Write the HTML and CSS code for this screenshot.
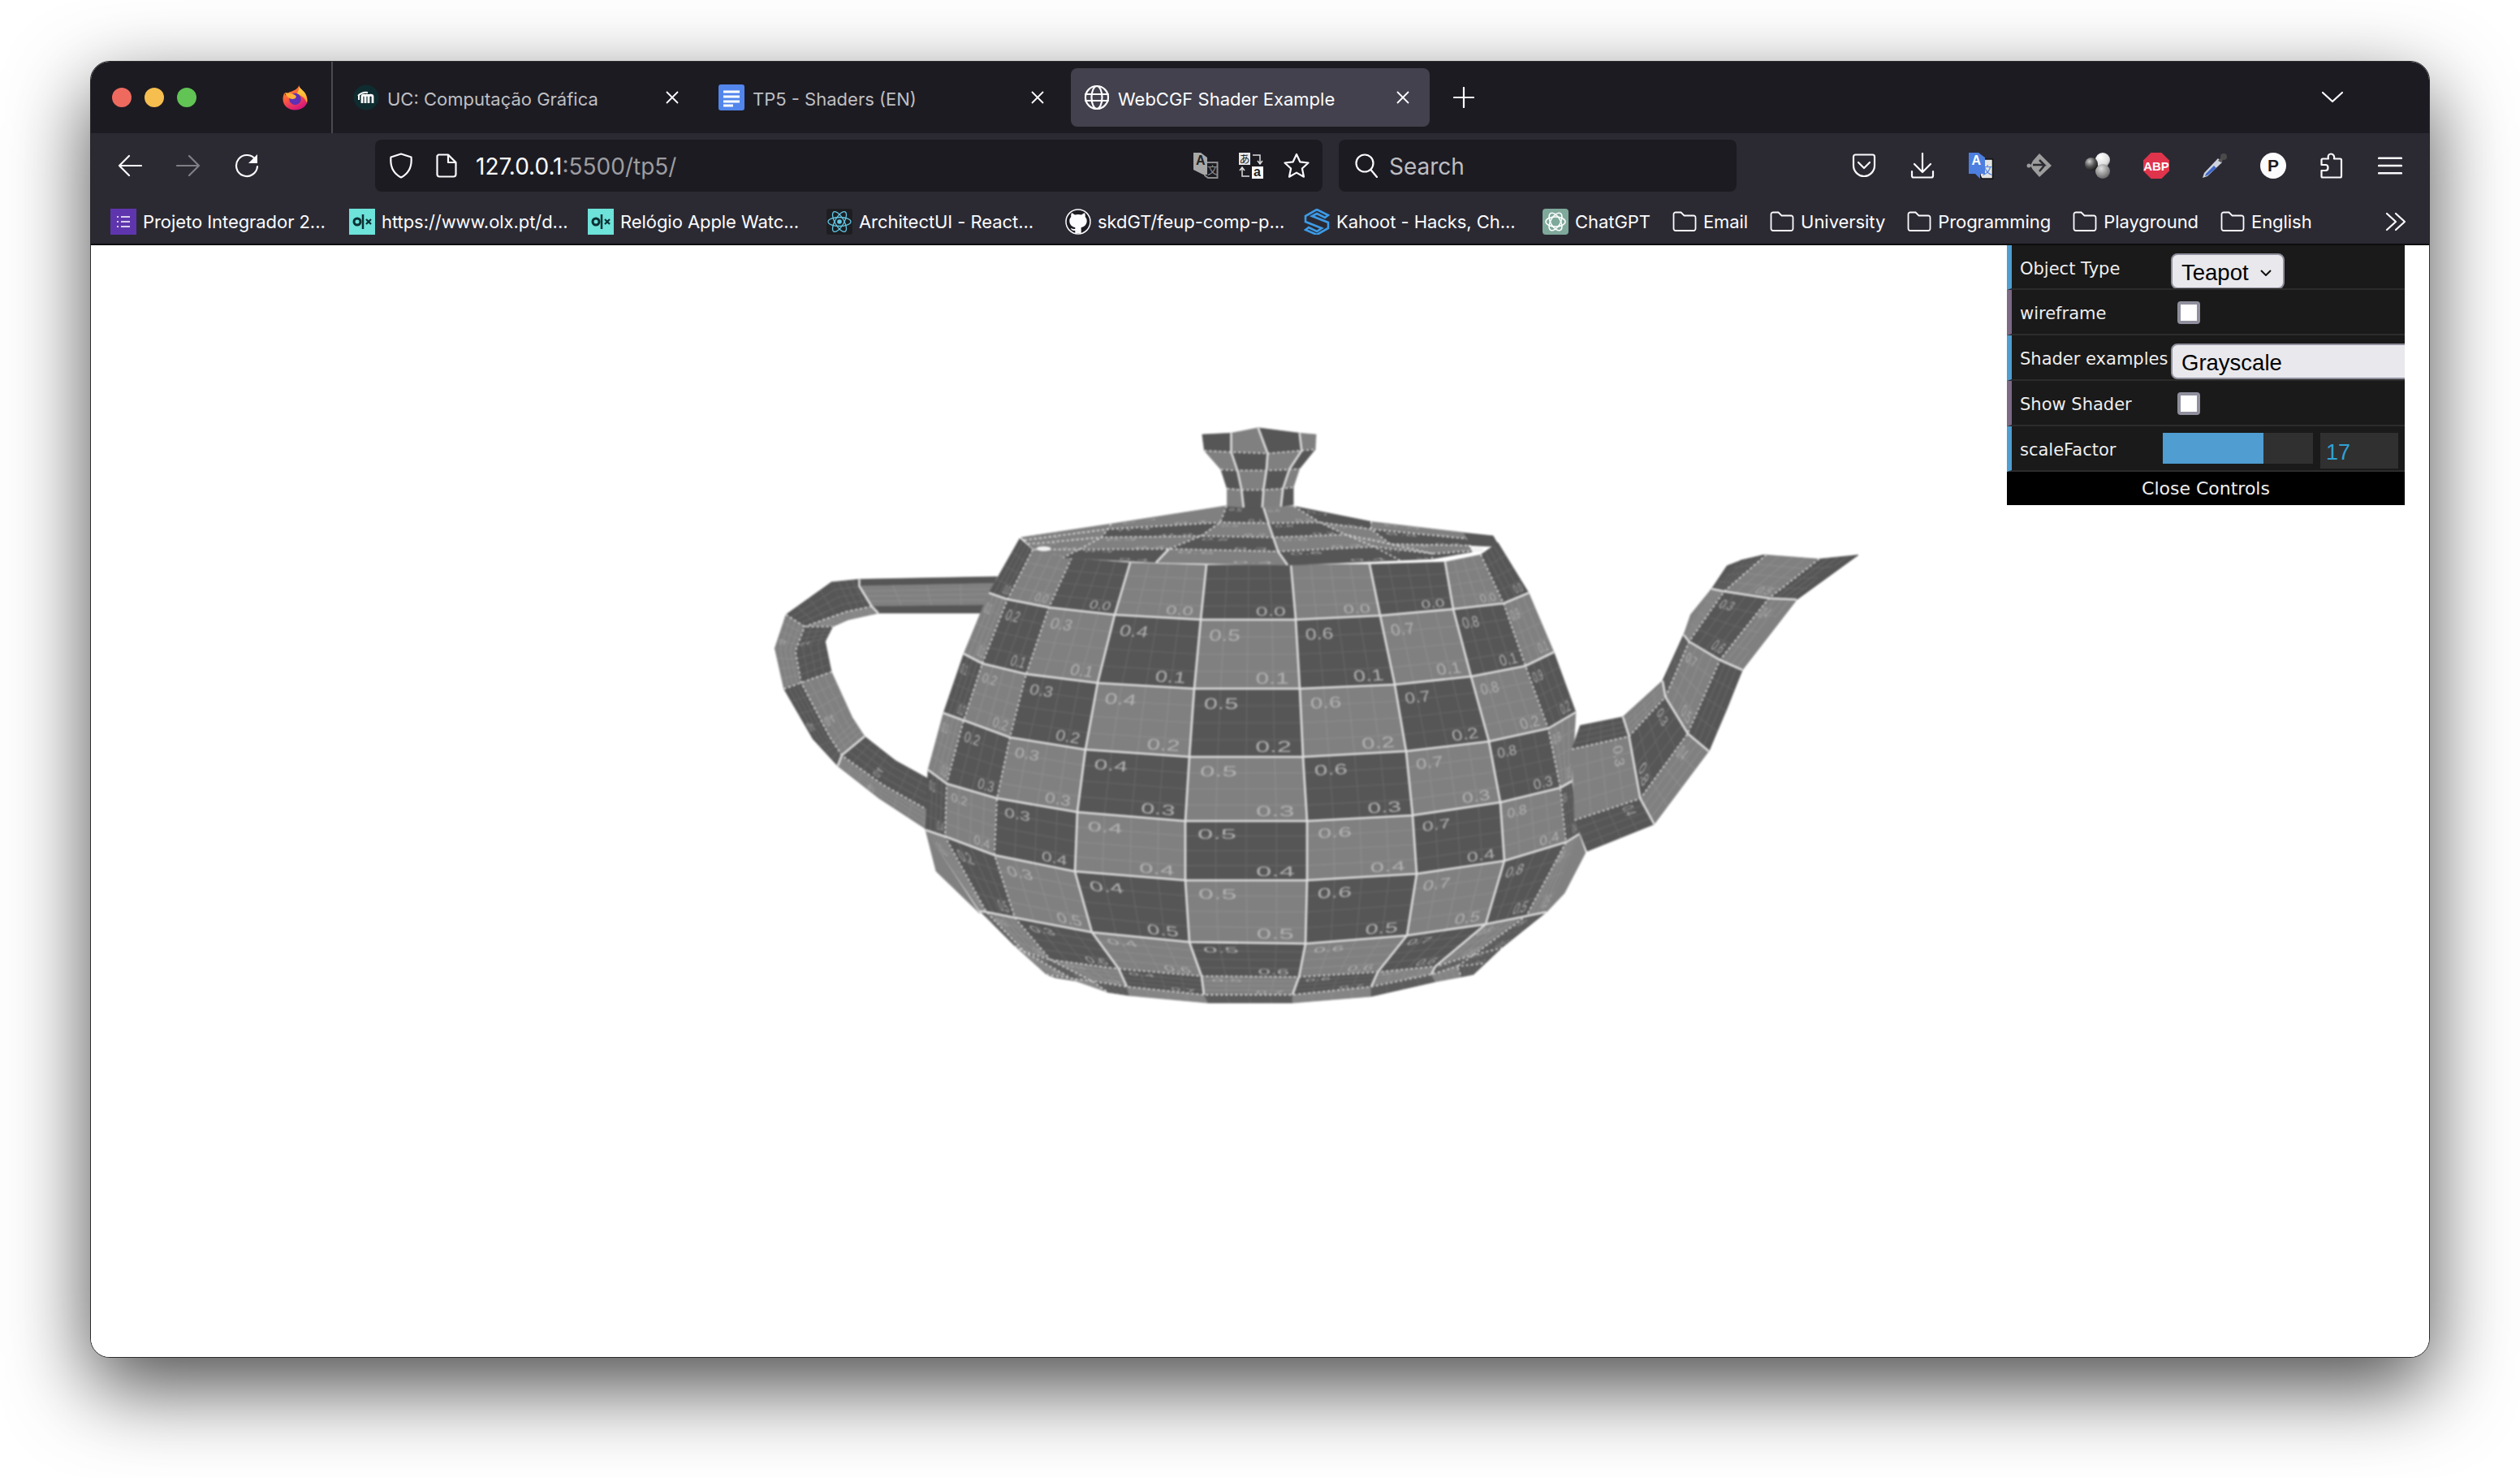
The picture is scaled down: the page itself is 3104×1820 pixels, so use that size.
FILE: index.html
```html
<!DOCTYPE html>
<html lang="en">
<head>
<meta charset="utf-8">
<title>WebCGF Shader Example</title>
<link rel="stylesheet" href="styles.css">
</head>
<body>
<svg class="defs" width="0" height="0" aria-hidden="true">
  <defs>
    <linearGradient id="ffBody" x1="0" y1="0" x2="0.5" y2="1"><stop offset="0" stop-color="#ffa52c"/><stop offset="0.5" stop-color="#ff5f3a"/><stop offset="1" stop-color="#d9197a"/></linearGradient>
    <linearGradient id="ffFlame" x1="0" y1="0" x2="0" y2="1"><stop offset="0" stop-color="#ffe14a"/><stop offset="1" stop-color="#ff9a24"/></linearGradient>
    <radialGradient id="ballDark" cx="0.35" cy="0.3" r="0.8"><stop offset="0" stop-color="#cfcfcf"/><stop offset="0.5" stop-color="#555"/><stop offset="1" stop-color="#111"/></radialGradient>
    <radialGradient id="ballLight" cx="0.35" cy="0.3" r="0.8"><stop offset="0" stop-color="#fff"/><stop offset="0.7" stop-color="#ddd"/><stop offset="1" stop-color="#999"/></radialGradient>
    <radialGradient id="ballMid" cx="0.4" cy="0.3" r="0.8"><stop offset="0" stop-color="#e0e0e0"/><stop offset="0.6" stop-color="#8d8d8d"/><stop offset="1" stop-color="#555"/></radialGradient>
    <symbol id="folder" viewBox="0 0 30 26"><path d="M1.500 4a2.500 2.500 0 0 1 2.500-2.500h6.500l4 4H26a2.500 2.500 0 0 1 2.500 2.500v13.500a2.500 2.500 0 0 1-2.500 2.500H4a2.500 2.500 0 0 1-2.500-2.500z"/></symbol>
    <symbol id="olx" viewBox="0 0 32 32"><rect width="32" height="32" fill="#6de3da"/><circle cx="10" cy="16" r="4" fill="none" stroke="#0b2f33" stroke-width="3"/><path d="M17 7v18" stroke="#0b2f33" stroke-width="2.500"/><path d="M21 13l6 6M27 13l-6 6" stroke="#0b2f33" stroke-width="2.200"/></symbol>
    <symbol id="close" viewBox="0 0 20 20"><path d="M3 3l14 14M17 3L3 17"/></symbol>
  </defs>
</svg>

<div class="window">
  <header class="titlebar">
    <div class="lights"><span class="light red"></span><span class="light amber"></span><span class="light green"></span></div>
    <svg class="firefox" viewBox="0 0 32 32"><path d="M21 0c0 5 5 6 8 11 3 5 3 10 2 12-2 5-8 9-15 9C7 32 .5 26 .5 18c0-3 1-6 2-8 .5 2 1 3 2 3.500C6 11 8 9 11 8.500 15 7 20 5 21 0z" fill="url(#ffBody)"/><path d="M21 0c0 5 5 6 8 11 2 4 3 8 2 12-2-6-6-10-14-11 3-3 5-7 4-12z" fill="url(#ffFlame)"/><circle cx="16" cy="18" r="7.500" fill="#5d30b5"/><path d="M3 10c5 0 11 1 14 4 1 2-1 4-4 4-4 0-8-3-10-8z" fill="#ffb03a"/></svg>
    <span class="tabsep"></span>
    <div class="tabs">
      <div class="tab">
        <svg class="tabicon" viewBox="0 0 32 32"><circle cx="16" cy="16" r="15.500" fill="#0f2d30"/><path d="M11 23v-8c0-2.500 4-2.500 4 0v8M15 23v-8c0-2.500 4-2.500 4 0v8M19 23v-8c0-2.500 5-2.500 5 0v8" fill="none" stroke="#fff" stroke-width="2.800"/><path d="M6 14c3-3 7-5 12-4M7 13v6" fill="none" stroke="#fff" stroke-width="2"/></svg>
        <span class="tabtext">UC: Computação Gráfica</span>
        <svg class="tabclose"><use href="#close"/></svg>
      </div>
      <div class="tab">
        <svg class="tabicon" viewBox="0 0 32 32"><rect width="32" height="32" rx="3" fill="#5286ec"/><path d="M6 9h20M6 15h20M6 21h20M6 26h12" stroke="#fff" stroke-width="3" fill="none"/></svg>
        <span class="tabtext">TP5 - Shaders (EN)</span>
        <svg class="tabclose"><use href="#close"/></svg>
      </div>
      <div class="tab active">
        <svg class="tabicon icon-line" viewBox="0 0 32 32"><circle cx="16" cy="16" r="14"/><ellipse cx="16" cy="16" rx="6.500" ry="14"/><path d="M2 12h28M2 20h28"/></svg>
        <span class="tabtext">WebCGF Shader Example</span>
        <svg class="tabclose"><use href="#close"/></svg>
      </div>
    </div>
    <svg class="newtab icon-line" viewBox="0 0 26 26"><path d="M13 1v24M1 13h24"/></svg>
    <svg class="tablist icon-line" viewBox="0 0 26 16"><path d="M1 2l12 11L25 2"/></svg>
  </header>

  <nav class="toolbar">
    <div class="navbtn"><svg class="icon30 icon-line" viewBox="0 0 30 30"><path d="M29 15H2M14 3L2 15l12 12"/></svg></div>
    <div class="navbtn dim"><svg class="icon30 icon-line" viewBox="0 0 30 30"><path d="M1 15h27M16 3l12 12-12 12"/></svg></div>
    <div class="navbtn"><svg class="icon30 icon-line" viewBox="0 0 30 30"><path d="M26 8A13 13 0 1 0 28 16"/><path class="solid" d="M28 1v11H17z"/></svg></div>
    <div class="urlbar">
      <svg class="shield icon-line" viewBox="0 0 28 32"><path d="M14 1.500l12.500 4c1 10-1 19-12.500 25C2.500 24.500.500 15.500 1.500 5.500z"/></svg>
      <svg class="fileicon icon-line" viewBox="0 0 26 30"><path d="M3 1.500h12l9.500 9.500v14.500a3 3 0 0 1-3 3H4.500a3 3 0 0 1-3-3V3zM15 1.500V11h9.500"/></svg>
      <span class="url">127.0.0.1<span class="url-dim">:5500/tp5/</span></span>
      <span class="url-actions">
        <svg class="icon32" viewBox="0 0 32 32"><path d="M15 12h15.500v19H19l-4-3z" fill="none" stroke="#8c8c8c" stroke-width="2"/><text class="tr-cjk" x="18" y="26" fill="#8c8c8c">文</text><path d="M1 0h9l8 6v21h-5L1 21z" fill="#a8a8a8"/><text class="tr-a" x="4" y="15" fill="#222">A</text></svg>
        <svg class="icon32" viewBox="0 0 32 32"><rect x="1" y="0" width="14" height="15" fill="#e8e8e8"/><text class="tr-cjk" x="1.500" y="12" fill="#222">あ</text><rect x="17" y="17" width="14" height="15" fill="#fff"/><text class="tr-a" x="19" y="29" fill="#222">a</text><path d="M18 3h9v10M24 10l3 4 3-4M14 29H5V19M2 22l3-4 3 4" fill="none" stroke="#ddd" stroke-width="1.500"/></svg>
        <svg class="icon32 icon-line" viewBox="0 0 32 32"><path d="M16 2l4.300 9.300 10.200 1.200-7.600 7 2.100 10.200L16 24.600 7 29.700l2.100-10.200-7.600-7 10.200-1.200z"/></svg>
      </span>
    </div>
    <div class="searchbar">
      <svg class="searchicon icon-line" viewBox="0 0 28 30"><circle cx="12" cy="12" r="10.500"/><path d="M19.500 20L27 29"/></svg>
      <span class="searchtext">Search</span>
    </div>
    <div class="actions">
      <div class="navbtn"><svg class="icon30 icon-line" viewBox="0 0 30 32"><path d="M2 5a2.500 2.500 0 0 1 2.500-2.500h21A2.500 2.500 0 0 1 28 5v11c0 7-6 13-13 13S2 23 2 16z"/><path d="M8 12l7 7 7-7"/></svg></div>
      <div class="navbtn"><svg class="icon30 icon-line" viewBox="0 0 30 32"><path d="M15 1v23M5 14l10 10 10-10M2 23v5.500a2 2 0 0 0 2 2h22a2 2 0 0 0 2-2V23"/></svg></div>
      <div class="navbtn"><svg class="icon32" viewBox="0 0 32 32"><path d="M15 8h15.500v24H17l-2-4z" fill="#e4e4e4" stroke="#111" stroke-width="1.500"/><text class="tr-cjk" x="17.500" y="26" fill="#4d7fe0">文</text><path d="M1 0h12l8 6v20h-6v6l-6-6H1z" fill="#4d7fe0"/><text class="tr-a" x="4.500" y="15" fill="#fff">A</text></svg></div>
      <div class="navbtn"><svg class="icon32" viewBox="0 0 32 32"><path d="M16 1l15 15-15 14-8-9-3-5 3-6z" fill="#9d9d9d"/><circle cx="3" cy="16" r="2.500" fill="#9d9d9d"/><path d="M8 15h14l-6-6M22 16l-6 7" fill="none" stroke="#2b2a33" stroke-width="2.500"/></svg></div>
      <div class="navbtn"><svg class="icon32" viewBox="0 0 32 32"><circle cx="22" cy="9" r="9" fill="url(#ballLight)"/><circle cx="22" cy="23" r="9" fill="url(#ballMid)"/><circle cx="8" cy="14" r="8" fill="url(#ballDark)"/></svg></div>
      <div class="navbtn"><svg class="icon32" viewBox="0 0 32 32"><path d="M9.500 0h13L32 9.500v13L22.500 32h-13L0 22.500v-13z" fill="#e0344c"/><text class="abp" x="16" y="21.500">ABP</text></svg></div>
      <div class="navbtn"><svg class="icon32" viewBox="0 0 32 32"><path d="M20 7L3 25l-2 6 6-2 18-17z" fill="#cfd3dc"/><path d="M15 16L5 26l-1 3 3-1 11-9z" fill="#3f68c8"/><path d="M20 10l6-6 2 2-4 6" fill="#555"/><circle cx="27" cy="5" r="4" fill="#4a4a4a"/></svg></div>
      <div class="navbtn"><svg class="icon32" viewBox="0 0 32 32"><circle cx="16" cy="16" r="16" fill="#fbfbfe"/><text class="pchip" x="16" y="23">P</text></svg></div>
      <div class="navbtn"><svg class="icon30 icon-line" viewBox="0 0 28 32"><path d="M13 1.500c-3 0-4 3-3 6H3a1.500 1.500 0 0 0-1.500 1.500v6h5c4 0 4 7 0 7h-5v7A1.500 1.500 0 0 0 3 30.500h21.500A1.500 1.500 0 0 0 26 29V9a1.500 1.500 0 0 0-1.500-1.500H17c1-3-1-6-4-6z"/></svg></div>
      <div class="navbtn"><svg class="icon30 icon-line" viewBox="0 0 26 20"><path d="M1 2h24M1 10h24M1 18h24"/></svg></div>
    </div>
  </nav>

  <div class="bookmarks">
    <div class="bm wide"><svg class="bmicon" viewBox="0 0 32 32"><rect width="32" height="32" fill="#5f35ae"/><path d="M13 10h11M13 16h11M13 22h11M8 10h2M8 16h2M8 22h2" stroke="#fff" stroke-width="1.600"/></svg><span>Projeto Integrador 2...</span></div>
    <div class="bm wide"><svg class="bmicon"><use href="#olx"/></svg><span>https://www.olx.pt/d...</span></div>
    <div class="bm wide"><svg class="bmicon"><use href="#olx"/></svg><span>Relógio Apple Watc...</span></div>
    <div class="bm wide"><svg class="bmicon" viewBox="0 0 32 32"><rect width="32" height="32" rx="3" fill="#1e1e22"/><g fill="none" stroke="#61c8e6" stroke-width="1.300"><ellipse cx="16" cy="16" rx="14" ry="5.500"/><ellipse cx="16" cy="16" rx="14" ry="5.500" transform="rotate(60 16 16)"/><ellipse cx="16" cy="16" rx="14" ry="5.500" transform="rotate(120 16 16)"/></g><circle cx="16" cy="16" r="2.800" fill="#61c8e6"/></svg><span>ArchitectUI - React...</span></div>
    <div class="bm wide"><svg class="bmicon" viewBox="0 0 32 32"><circle cx="16" cy="16" r="15" fill="#1c1b22" stroke="#fbfbfe" stroke-width="1.500"/><path d="M8 5l4 2.500c2.500-.7 5.500-.7 8 0L24 5c.8 2 1 3.500.7 5 1.300 1.500 2 3 2 5 0 5-3.500 7.500-7 8v7h-7.400v-3c-3 .5-4.500-1-5.500-3 1.500.5 3 1 5.500 1v-2c-3.500-.5-7-3-7-8 0-2 .7-3.500 2-5-.3-1.500-.1-3 .7-5z" fill="#fbfbfe"/></svg><span>skdGT/feup-comp-p...</span></div>
    <div class="bm wide"><svg class="bmicon" viewBox="0 0 32 32"><path d="M16 1L2 9v7l20 8-6 4-10-5-4 3 14 6 14-8v-7L10 9l6-3 10 5 4-3z" fill="none" stroke="#3c9be8" stroke-width="2.600"/></svg><span>Kahoot - Hacks, Ch...</span></div>
    <div class="bm"><svg class="bmicon" viewBox="0 0 32 32"><rect width="32" height="32" rx="4" fill="#7fa99b"/><g fill="none" stroke="#fff" stroke-width="1.500"><ellipse cx="16" cy="16" rx="12" ry="6"/><ellipse cx="16" cy="16" rx="12" ry="6" transform="rotate(60 16 16)"/><ellipse cx="16" cy="16" rx="12" ry="6" transform="rotate(120 16 16)"/></g></svg><span>ChatGPT</span></div>
    <div class="bm"><svg class="foldericon"><use href="#folder"/></svg><span>Email</span></div>
    <div class="bm"><svg class="foldericon"><use href="#folder"/></svg><span>University</span></div>
    <div class="bm"><svg class="foldericon"><use href="#folder"/></svg><span>Programming</span></div>
    <div class="bm"><svg class="foldericon"><use href="#folder"/></svg><span>Playground</span></div>
    <div class="bm"><svg class="foldericon"><use href="#folder"/></svg><span>English</span></div>
    <svg class="overflow icon-line" viewBox="0 0 26 24"><path d="M2 2l11 10L2 22M13 2l11 10-11 10"/></svg>
  </div>

  <main class="content">
    <svg id="teapot" class="scene" viewBox="112 302 2880 1369"></svg>
    <aside class="gui">
      <div class="row blue">
        <span class="rowlabel">Object Type</span>
        <span class="sel sel-short"><span>Teapot</span><svg class="selarrow" viewBox="0 0 14 8"><path d="M1 1l6 6 6-6"/></svg></span>
      </div>
      <div class="row purple">
        <span class="rowlabel">wireframe</span>
        <span class="check"></span>
      </div>
      <div class="row blue">
        <span class="rowlabel">Shader examples</span>
        <span class="sel sel-long"><span>Grayscale</span></span>
      </div>
      <div class="row purple">
        <span class="rowlabel">Show Shader</span>
        <span class="check"></span>
      </div>
      <div class="row blue">
        <span class="rowlabel narrow">scaleFactor</span>
        <span class="slider"><span class="slider-fill"></span></span>
        <span class="number">17</span>
      </div>
      <div class="closebar">Close Controls</div>
    </aside>
  </main>
</div>
<script src="script.js"></script>
</body>
</html>
```

FILE: styles.css
```css
* { box-sizing: border-box; }
html, body { margin: 0; height: 100%; background: #fff; }
body {
  padding: 75px 111px 148px;
  font-family: Inter, "Liberation Sans", sans-serif;
  overflow: hidden;
}
.defs { display: block; height: 0; }
.window {
  width: 2882px;
  height: 1597px;
  border: 1px solid #2b2b2f;
  border-radius: 24px;
  overflow: hidden;
  display: flex;
  flex-direction: column;
  background: #fff;
  box-shadow: 0 36px 100px rgba(0, 0, 0, .7);
}
.icon-line { fill: none; stroke: #fbfbfe; stroke-width: 2.2; stroke-linecap: round; stroke-linejoin: round; }
.icon-line .solid { fill: #fbfbfe; stroke: none; }

/* title bar */
.titlebar { height: 88px; background: #1c1b22; display: flex; align-items: center; flex: none; }
.lights { display: flex; gap: 16px; padding-left: 26px; }
.light { width: 24px; height: 24px; border-radius: 50%; }
.red { background: #ee6a5f; }
.amber { background: #f5be4f; }
.green { background: #61c454; }
.firefox { width: 31px; height: 32px; margin-left: 106px; }
.tabsep { width: 2px; height: 88px; background: #4a4a50; margin-left: 29px; }
.tabs { display: flex; gap: 8px; margin-left: 9px; }
.tab { width: 442px; height: 72px; padding: 0 23px 0 16px; border-radius: 8px; display: flex; align-items: center; gap: 10px; color: #bfbfc3; font-size: 22px; }
.tab.active { background: #42414d; color: #fbfbfe; }
.tabicon { width: 32px; height: 32px; flex: none; }
.tabtext { flex: 1; white-space: nowrap; overflow: hidden; padding-top: 3px; }
.tabclose { width: 20px; height: 20px; fill: none; stroke: #fbfbfe; stroke-width: 1.800; flex: none; }
.newtab { width: 26px; height: 26px; margin-left: 29px; }
.tablist { width: 26px; height: 16px; margin-left: auto; margin-right: 106px; }

/* toolbar */
.toolbar { height: 80px; background: #2b2a33; display: flex; align-items: center; padding-left: 12px; flex: none; }
.navbtn { width: 72px; height: 64px; display: flex; align-items: center; justify-content: center; flex: none; }
.navbtn.dim { opacity: .4; }
.icon30 { width: 30px; height: 32px; }
.icon32 { width: 32px; height: 32px; flex: none; overflow: visible; }
.urlbar { width: 1167px; height: 64px; margin-left: 122px; background: #1c1b22; border-radius: 8px; display: flex; align-items: center; padding: 0 16px 0 18px; }
.shield { width: 28px; height: 32px; }
.fileicon { width: 26px; height: 30px; margin-left: 29px; }
.url { margin-left: 23px; padding-top: 2px; color: #fbfbfe; font-size: 28px; white-space: nowrap; }
.url-dim { color: #9d9da1; }
.url-actions { margin-left: auto; display: flex; gap: 24px; }
.tr-cjk { font: 13px "Noto Sans CJK JP", sans-serif; }
.tr-a { font: bold 16px "Liberation Sans", sans-serif; }
.abp { font: bold 15px "Liberation Sans", sans-serif; fill: #fff; text-anchor: middle; }
.pchip { font: bold 21px "Liberation Sans", sans-serif; fill: #1c1b22; text-anchor: middle; }
.searchbar { width: 490px; height: 64px; margin-left: 20px; background: #1c1b22; border-radius: 8px; display: flex; align-items: center; gap: 14px; padding-left: 20px; }
.searchicon { width: 28px; height: 30px; }
.searchtext { color: #bdbdc1; font-size: 28px; padding-top: 2px; }
.actions { display: flex; margin-left: 121px; }

/* bookmarks */
.bookmarks { height: 58px; background: #2b2a33; border-bottom: 2px solid #0c0c0d; display: flex; align-items: center; gap: 27px; padding: 2px 0 0 24px; color: #fbfbfe; font-size: 22px; letter-spacing: -.06px; flex: none; }
.bm { display: flex; align-items: center; gap: 8px; white-space: nowrap; flex: none; }
.bm.wide { width: 267px; }
.bmicon { width: 32px; height: 32px; flex: none; }
.foldericon { width: 30px; height: 26px; fill: none; stroke: #fbfbfe; stroke-width: 1.800; flex: none; }
.overflow { width: 26px; height: 24px; margin-left: auto; margin-right: 28px; }

/* content */
.content { flex: 1; position: relative; background: #fff; overflow: hidden; min-height: 0; }
.scene { display: block; width: 100%; height: 100%; filter: blur(.8px); }
.cd { fill: #565656; stroke: #565656; stroke-width: .6; }
.cl { fill: #808080; stroke: #808080; stroke-width: .6; }
.gl { fill: none; stroke: rgba(255, 255, 255, .1); stroke-width: 1.200; }
.bl { fill: none; stroke: #dedede; stroke-width: 2.600; stroke-linejoin: round; }
.dl { fill: none; stroke: #dadada; stroke-width: 1.800; stroke-dasharray: 3 3; }
.hl { fill: #f2f2f2; }
.tl { font: 23px "Liberation Sans", sans-serif; fill: #b2b2b2; }

/* controls */
.gui { position: absolute; top: 0; right: 30px; width: 490px; color: #eee; font: 21px "DejaVu Sans", sans-serif; }
.row { height: 56px; background: #1a1a1a; border-bottom: 2px solid #2c2c2c; border-left: 6px solid; display: flex; align-items: flex-start; padding-left: 10px; overflow: hidden; }
.row:first-child { height: 55px; }
.blue { border-left-color: #4f9dd1; }
.purple { border-left-color: #7d6a85; }
.rowlabel { width: 186px; flex: none; line-height: 59px; white-space: nowrap; text-shadow: 0 -1px 0 #111; }
.rowlabel.narrow { width: 176px; }
.sel { display: flex; align-items: center; height: 44px; margin-top: 10px; background: #e9e9ed; border: 2px solid #8f8f9d; border-radius: 8px; padding: 3px 11px 0; color: #000; font: 27.5px "Liberation Sans", sans-serif; flex: none; }
.sel-short { width: 140px; justify-content: space-between; }
.sel-long { width: 320px; }
.selarrow { width: 14px; height: 8px; fill: none; stroke: #111; stroke-width: 2; margin-right: 3px; }
.check { width: 28px; height: 28px; margin: 14px 0 0 8px; background: #fff; border: 4px solid #8f8f9d; border-radius: 4px; flex: none; }
.slider { width: 185px; height: 38px; margin-top: 8px; background: #303030; flex: none; display: block; }
.slider-fill { display: block; width: 124px; height: 100%; background: #4f9dd1; }
.number { width: 96px; height: 44px; margin: 8px 0 0 9px; background: #303030; color: #2fa1d6; font: 27px "Liberation Sans", sans-serif; line-height: 48px; padding-left: 7px; flex: none; }
.closebar { height: 41px; background: #000; text-align: center; line-height: 42px; font-size: 22px; text-shadow: 0 -1px 0 #111; }
```

FILE: script.js
```javascript
(function () {
  var out = [];
  var z5 = function (p) { return [940 + p[0] / 1.96, 500 + p[1] / 3]; };
  var z7 = function (p) { return [1800 + p[0] / 2.904, 640 + p[1] / 3]; };
  var zl = function (p) { return [1250 + p[0] / 2.529, 610 + p[1] / 3]; };
  function lerp(a, b, t) { return [a[0] + (b[0] - a[0]) * t, a[1] + (b[1] - a[1]) * t]; }
  function bil(q, u, v) { return lerp(lerp(q[0], q[1], u), lerp(q[2], q[3], u), v); }
  function f(n) { return n.toFixed(1); }
  function pt(p) { return f(p[0]) + ',' + f(p[1]); }

  function label(q, s, u, v) {
    var p = bil(q, u, v), a = bil(q, u + 0.01, v), b = bil(q, u, v + 0.01);
    var m = [(a[0] - p[0]), (a[1] - p[1]), (b[0] - p[0]), (b[1] - p[1]), p[0], p[1]];
    out.push('<text class="tl" transform="matrix(' + m.map(function (n) { return n.toFixed(3); }).join(' ') + ')">' + s + '</text>');
  }
  function cell(q, dark, top, bottom, noGrid) {
    out.push('<polygon class="' + (dark ? 'cd' : 'cl') + '" points="' + [q[0], q[1], q[3], q[2]].map(pt).join(' ') + '"/>');
    if (!noGrid) {
      var d = '';
      for (var k = 1; k < 4; k++) {
        d += 'M' + pt(bil(q, k / 4, 0)) + 'L' + pt(bil(q, k / 4, 1));
        d += 'M' + pt(bil(q, 0, k / 4)) + 'L' + pt(bil(q, 1, k / 4));
      }
      out.push('<path class="gl" d="' + d + '"/>');
    }
    if (top) label(q, top, 0.1, 0.3);
    if (bottom) label(q, bottom, 0.58, 0.93);
  }
  function line(points, cls) {
    out.push('<path class="' + cls + '" d="M' + points.map(pt).join('L') + '"/>');
  }
  function poly(points, dark) {
    out.push('<polygon class="' + (dark ? 'cd' : 'cl') + '" points="' + points.map(pt).join(' ') + '"/>');
  }
  function dec(n) { return '0.' + n; }

  /* ---------- handle (behind the body) ---------- */
  var H = [
    [[565, 630], [550, 735], [530, 765]],
    [[232, 640], [262, 740], [278, 765]],
    [[165, 650], [200, 760], [205, 790]],
    [[55, 770], [100, 815], [168, 815]],
    [[28, 895], [78, 905], [150, 870]],
    [[50, 1045], [92, 1022], [165, 982]],
    [[120, 1230], [160, 1220], [215, 1150]],
    [[180, 1330], [190, 1290], [245, 1220]],
    [[280, 1450], [290, 1400], [320, 1310]],
    [[420, 1590], [430, 1520], [450, 1420]]
  ].map(function (s) { return s.map(z5); });
  var hDark = [[null, null], [1, 0], [1, 0], [0, 1], [0, 1], [1, 0], [1, 0], [0, 1], [0, 1]];
  var hLabels = { 3: '0.4', 5: '0.4', 7: '0.4' };
  H.forEach(function (s, k) {
    if (k === H.length - 1) return;
    for (var b = 0; b < 2; b++) {
      if (hDark[k][b] === null) continue;
      var n = H[k + 1];
      cell([n[b], n[b + 1], s[b], s[b + 1]], !!hDark[k][b], hLabels[k] || null, null);
    }
  });
  /* first, straight piece of the handle: dark, light, dark bands */
  var s0 = [[565, 630], [558, 655], [550, 735], [530, 765]].map(z5);
  var s1 = [[232, 640], [232, 665], [262, 740], [278, 765]].map(z5);
  cell([s1[0], s0[0], s1[1], s0[1]], true, null, null, true);
  cell([s1[1], s0[1], s1[2], s0[2]], false, null, null);
  cell([s1[2], s0[2], s1[3], s0[3]], true, null, null, true);
  line([s1[0], s1[1], s1[2], s1[3]], 'bl');
  line(H.map(function (s) { return s[1]; }).slice(1), 'dl');
  line([H[3][0], H[3][1], H[3][2]], 'dl');
  line([H[5][0], H[5][1], H[5][2]], 'dl');
  line([H[7][0], H[7][1], H[7][2]], 'bl');

  /* ---------- body ---------- */
  var C = [
    [[1256,663],[1218,730],[1187,805],[1162,878],[1143,948],[1140,1022],[1207,1122],[1250,1165],[1289,1200],[1300,1204]],
    [[1272,677],[1241,738],[1210,817],[1187,887],[1166,965],[1164,1030],[1215,1123],[1262,1172],[1320,1205],[1325,1208]],
    [[1320,687],[1292,748],[1264,830],[1244,908],[1228,983],[1225,1053],[1250,1130],[1294,1182],[1345,1208],[1365,1222]],
    [[1392,693],[1373,757],[1352,841],[1337,923],[1327,1000],[1324,1073],[1345,1148],[1378,1193],[1388,1215],[1391,1226]],
    [[1486,696],[1479,763],[1471,848],[1465,932],[1460,1011],[1460,1084],[1465,1160],[1480,1202],[1483,1225],[1488,1235]],
    [[1590,695],[1596,763],[1601,848],[1605,932],[1610,1011],[1610,1084],[1608,1162],[1600,1203],[1592,1225],[1592,1235]],
    [[1687,695],[1700,758],[1718,843],[1732,925],[1740,1004],[1745,1076],[1733,1152],[1697,1197],[1689,1215],[1689,1227]],
    [[1780,692],[1790,750],[1812,833],[1834,913],[1848,988],[1853,1060],[1830,1138],[1768,1190],[1763,1200],[1768,1209]],
    [[1824,683],[1852,743],[1879,820],[1907,897],[1922,970],[1929,1037],[1880,1128],[1815,1176],[1795,1190],[1800,1203]],
    [[1845,668],[1883,730],[1914,803],[1941,877],[1936,962],[1945,1027],[1905,1123],[1850,1167],[1830,1186],[1815,1200]]
  ];
  poly([[1140, 1022], [1153, 1073], [1207, 1125]], false);
  poly([[1945, 1027], [1953, 1050], [1927, 1100], [1905, 1123]], false);
  for (var i = 0; i < 9; i++) {
    for (var j = 0; j < 9; j++) {
      var q = [C[i][j], C[i + 1][j], C[i][j + 1], C[i + 1][j + 1]];
      var isDark = (i + j) % 2 === 0 || (i === 8 && j >= 7);
      cell(q, isDark, j >= 1 && j < 8 ? dec(i + 1) : null, j < 8 ? dec(j) : null);
    }
  }
  [1, 2, 8].forEach(function (c) { line(C[c], 'dl'); });
  [3, 4, 5, 6, 7].forEach(function (c) { line(C[c].slice(0, 9), 'bl'); });
  for (var r = 1; r < 9; r++) {
    var row = C.map(function (col) { return col[r]; });
    line(row, r < 7 ? 'bl' : 'dl');
  }

  /* ---------- lid ---------- */
  var L = [
    [[20,155],[300,105],[660,38],[775,45],[870,40],[1110,97],[1490,150]],
    [[30,165],[290,125],[640,100],[790,103],[950,100],[1110,125],[1450,165]],
    [[40,180],[270,155],[580,150],[805,155],[1030,145],[1170,180],[1410,185]],
    [[60,200],[200,200],[480,198],[820,207],[1120,190],[1300,215],[1430,205]],
    [[65,205],[150,230],[440,248],[850,258],[1200,240],[1300,235],[1420,210]]
  ].map(function (s) { return s.map(zl); });
  var lidDark = [
    [0, 0, 1, 0, 1, 0],
    [0, 1, 0, 1, 0, 1],
    [0, 0, 1, 0, 0, 0],
    [0, 1, 0, 1, 1, 1]
  ];
  for (var a = 0; a < 4; a++) {
    for (var b = 0; b < 6; b++) {
      cell([L[a][b], L[a][b + 1], L[a + 1][b], L[a + 1][b + 1]], !!lidDark[a][b], dec(b + 3), dec(a + 1), true);
    }
  }
  [1, 2, 3].forEach(function (r3) { line(L[r3], 'dl'); });
  [1, 2, 4, 5].forEach(function (c3) { line(L.map(function (s) { return s[c3]; }), 'dl'); });
  line(L.map(function (s) { return s[3]; }), 'bl');
  line([L[3][2], L[4][2]], 'bl');
  poly([[1400,140],[1490,150],[1510,190],[1420,185]].map(zl), true);
  out.push('<ellipse class="hl" cx="' + f(zl([90, 197])[0]) + '" cy="' + f(zl([90, 197])[1]) + '" rx="9" ry="3"/>');
  out.push('<ellipse class="hl" cx="' + f(zl([1440, 200])[0]) + '" cy="' + f(zl([1440, 200])[1]) + '" rx="8" ry="3"/>');

  /* ---------- knob ---------- */
  var K = [
    [[1060,105],[1130,100],[1195,80],[1295,100],[1335,105]],
    [[1065,165],[1130,170],[1218,175],[1300,165],[1333,160]],
    [[1105,235],[1145,238],[1215,238],[1270,235],[1295,232]],
    [[1120,305],[1155,310],[1208,310],[1255,305],[1280,300]],
    [[1120,370],[1160,375],[1205,375],[1250,372],[1280,365]]
  ].map(function (s) { return s.map(z5); });
  for (var kj = 0; kj < 4; kj++) {
    for (var ki = 0; ki < 4; ki++) {
      cell([K[kj][ki], K[kj][ki + 1], K[kj + 1][ki], K[kj + 1][ki + 1]], (ki + kj) % 2 === 0, null, null, true);
    }
  }
  [1, 2, 3].forEach(function (c) { line(K.map(function (s) { return s[c]; }), 'bl'); });
  [1, 2, 3].forEach(function (r2) { line(K[r2], 'dl'); });

  /* ---------- spout (over the body) ---------- */
  var S = [
    [[425,760],[395,848],[405,1110],[450,1225]],
    [[578,728],[600,800],[640,1030],[690,1125]],
    [[720,595],[730,655],[810,790],[885,855]],
    [[795,425],[815,450],[925,518],[1005,555]],
    [[895,255],[940,265],[1100,290],[1200,295]],
    [[1000,150],[1090,130],[1280,145],[1420,130]]
  ].map(function (s) { return s.map(z7); });
  var sDark = [[1, 0, 1], [0, 1, 0], [1, 0, 1], [0, 1, 0], [1, 0, 1]];
  var sTop = [[null, '0.3', '0.4'], [null, '0.3', '0.4'], [null, '0.7', null], [null, '0.3', '0.4'], [null, null, null]];
  var sBot = [[null, null, null], [null, '0.8', null], [null, '0.5', null], [null, '0.6', null], [null, '0.5', null]];
  for (var sk = 0; sk < 5; sk++) {
    for (var sb = 0; sb < 3; sb++) {
      cell([S[sk + 1][sb], S[sk + 1][sb + 1], S[sk][sb], S[sk][sb + 1]], !!sDark[sk][sb], sTop[sk][sb], sBot[sk][sb]);
    }
  }
  /* outline bulges of the spout */
  poly([[610,720],[720,595],[578,728]].map(z7), false);
  poly([[720,595],[770,490],[795,425]].map(z7), true);
  poly([[795,425],[820,350],[895,255]].map(z7), false);
  poly([[895,255],[950,170],[1000,150]].map(z7), true);
  poly([[1000,150],[1080,130],[1090,130]].map(z7), true);
  poly([[885,855],[1005,555],[950,700]].map(z7), true);
  poly([[1005,555],[1050,430],[1200,295]].map(z7), false);
  poly([[1200,295],[1300,190],[1420,130]].map(z7), true);
  line(S.map(function (s) { return s[1]; }), 'dl');
  line(S.map(function (s) { return s[2]; }), 'dl');
  line(S[1], 'bl');
  line(S[2], 'bl');
  line(S[3], 'bl');
  line(S[4], 'bl');

  document.getElementById('teapot').innerHTML = out.join('');
})();
```
